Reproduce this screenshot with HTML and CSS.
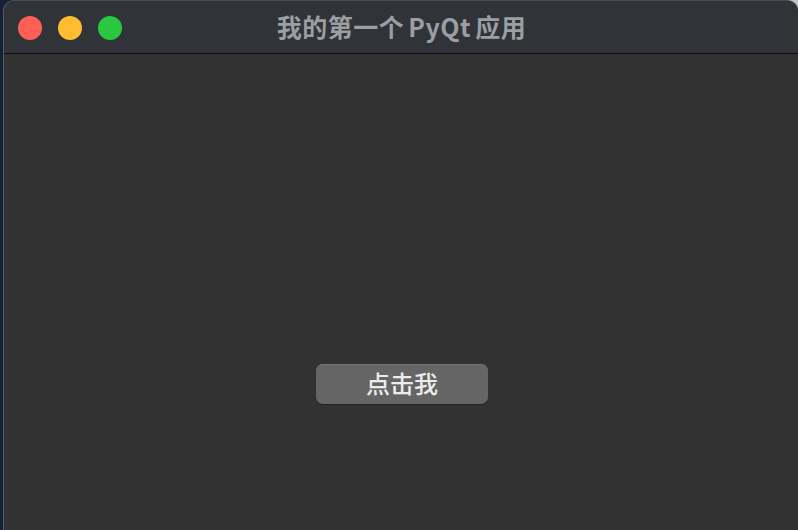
FILE: index.html
```html
<!DOCTYPE html>
<html lang="zh-CN">
<head>
<meta charset="utf-8">
<title>我的第一个PyQt应用</title>
<link rel="stylesheet" href="styles.css">
</head>
<body>
<div class="window">
  <div class="titlebar">
    <div class="lights">
      <span class="light red"></span>
      <span class="light yellow"></span>
      <span class="light green"></span>
    </div>
    <div class="title">我的第一个<span class="latin">PyQt</span>应用</div>
    <div class="spacer"></div>
  </div>
  <div class="content">
    <button class="btn" type="button">点击我</button>
  </div>
</div>
</body>
</html>
```
FILE: styles.css
```css
html, body {
  margin: 0;
  padding: 0;
  width: 798px;
  height: 530px;
  overflow: hidden;
}
body {
  background: linear-gradient(to right, #13203a 0%, #2a2e36 50%, #c4c7ca 100%);
  font-family: "Noto Sans CJK SC", "Noto Sans", sans-serif;
}
.window {
  margin-left: 3px;
  height: 530px;
  box-sizing: border-box;
  border-left: 1px solid #5c5c5c;
  border-top: 1px solid #4a4d52;
  border-radius: 11px 11px 0 0;
  overflow: hidden;
  display: flex;
  flex-direction: column;
  background: #323232;
}
.titlebar {
  height: 52px;
  flex: none;
  background: #303338;
  border-bottom: 1px solid #0c0c0c;
  display: grid;
  grid-template-columns: 1fr auto 1fr;
  align-items: center;
}
.lights {
  display: flex;
  gap: 16px;
  padding-left: 14px;
  padding-top: 1px;
}
.light {
  width: 24px;
  height: 24px;
  border-radius: 50%;
  display: block;
}
.red { background: #fe5f57; }
.yellow { background: #febc2e; }
.green { background: #28c840; }
.title {
  color: #9b9ea2;
  font-size: 25px;
  font-weight: 700;
  letter-spacing: 0.5px;
  line-height: 1;
  padding-bottom: 2px;
  padding-left: 1px;
}
.latin {
  margin: 0 4px 0 4px;
}
.content {
  flex: 1;
  background: #323232;
  display: flex;
  justify-content: center;
  align-items: flex-start;
  padding-top: 310px;
  padding-left: 2px;
}
.btn {
  width: 172px;
  height: 40px;
  border: none;
  border-radius: 7px;
  background: #656565;
  box-shadow: inset 0 1px 0 #747474, 0 1px 1px rgba(0,0,0,0.35);
  color: #ececec;
  font-family: "Noto Sans CJK SC", "Noto Sans", sans-serif;
  font-size: 24px;
  font-weight: 500;
  line-height: 1;
  padding: 0 0 2px 0;
}
```
